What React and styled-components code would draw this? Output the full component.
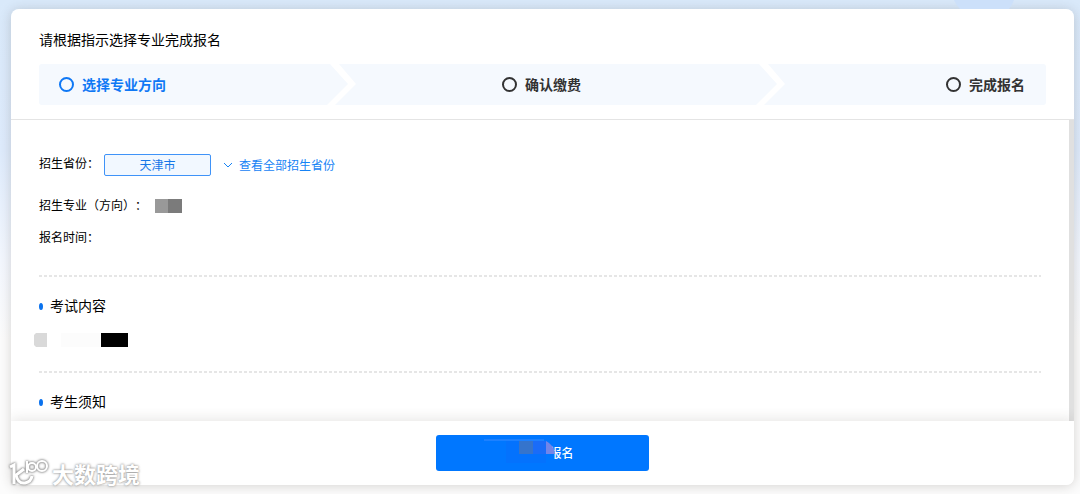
import React from "react";
import styled, { createGlobalStyle } from "styled-components";

const GlobalStyle = createGlobalStyle`
  * { box-sizing: border-box; }
  body {
    margin: 0;
    font-family: "Noto Sans CJK SC", sans-serif;
    font-size: 12px;
    line-height: 20px;
    text-spacing-trim: space-all;
    color: #000;
  }
`;

const Page = styled.div`
  position: relative;
  height: 100vh;
  padding: 9px 6px 9px 11px;
  background: linear-gradient(#d9e9fa 0, #deebfc 150px, #f3f7fe 260px, #fcfcfc 340px);
`;

const Backdrop = styled.svg`
  position: absolute;
  top: 0;
  right: 64px;
`;

const Shadow = styled.div`
  height: 100%;
  border-radius: 8px;
  box-shadow: 0 1px 12px rgba(60, 50, 40, 0.2);
`;

const Card = styled.main`
  display: flex;
  flex-direction: column;
  height: 100%;
  border-radius: 8px;
  background: #fff;
  overflow: hidden;
`;

const Header = styled.header`
  padding: 20px 28px 14px;
  border-bottom: 1px solid #e4e4e4;
`;

const Title = styled.h1`
  margin: 0 0 15px;
  font-size: 14px;
  font-weight: 400;
  line-height: 20px;
`;

const Steps = styled.ol`
  display: grid;
  grid-template-columns: 288fr 30px 400fr 30px 260fr;
  height: 41px;
  margin: 0;
  padding: 0;
  list-style: none;
  border-radius: 3px;
  background: #f5f9fe;
`;

const Step = styled.li`
  display: flex;
  align-items: center;
  justify-content: ${(p) => p.$align};
  gap: 8px;
  padding: ${(p) => p.$pad};
  font-size: 14px;
  font-weight: 700;
  line-height: 20px;
  color: ${(p) => (p.$active ? "#0f78f5" : "#333")};
`;

const StepLabel = styled.span`
  padding-bottom: 2px;
`;

const Ring = styled.span`
  width: 15px;
  height: 15px;
  border: 2px solid currentColor;
  border-radius: 50%;
`;

const Content = styled.section`
  flex: 1;
  min-height: 0;
  padding: 33px 28px 0;
  overflow: hidden;
  border-right: 5px solid #e0e0e0;
`;

const Row = styled.div`
  display: flex;
  align-items: center;
  height: 22px;
  margin-bottom: ${(p) => p.$gap}px;
`;

const RowLabel = styled.span`
  padding-bottom: 2px;
`;

const Province = styled.button`
  width: 107px;
  height: 22px;
  margin: 2px 12px 0 5px;
  padding: 0;
  border: 1px solid #3f93f8;
  border-radius: 2px;
  background: #f2f8ff;
  color: #1677e8;
  font: inherit;
`;

const MoreLink = styled.a`
  display: flex;
  align-items: center;
  gap: 6px;
  margin-top: 2px;
  color: #1683f5;
  font-size: 12px;
  text-decoration: none;
`;

const Mosaic = styled.svg`
  display: block;
  margin-left: ${(p) => p.$left || 0}px;
`;

const Divider = styled.hr`
  height: 2px;
  margin: 0;
  border: 0;
  background: repeating-linear-gradient(90deg, #e6e6e6 0 3px, #fff 3px 5px);
`;

const Heading = styled.h2`
  display: flex;
  align-items: center;
  gap: 7px;
  height: 22px;
  margin: 18px 0 16px;
  font-size: 14px;
  font-weight: 400;
  &::before {
    content: "";
    width: 4px;
    height: 7px;
    border-radius: 50%;
    background: #0a72ee;
  }
`;

const HeadingText = styled.span`
  padding-bottom: 2px;
`;

const Exam = styled.div`
  padding-bottom: 24px;
`;

const Footer = styled.footer`
  position: relative;
  display: flex;
  justify-content: center;
  padding: 14px 0;
  background: #fff;
  box-shadow: 0 -2px 12px rgba(60, 50, 40, 0.12);
`;

const Submit = styled.button`
  position: relative;
  width: 213px;
  height: 36px;
  padding: 0 0 0 38px;
  border: 0;
  border-radius: 3px;
  background: #0077ff;
  color: #fff;
  font: inherit;
  font-weight: 500;
`;

const SubmitMosaic = styled.svg`
  position: absolute;
  top: 4px;
  left: 48px;
`;

const Watermark = styled.div`
  position: absolute;
  bottom: 6px;
  left: 9px;
  display: flex;
  align-items: center;
  gap: 3px;
  color: #fff;
  font-size: 22px;
  font-weight: 700;
  line-height: 30px;
  text-shadow: 0 0 2px #999, 0 0 3px #aaa;
  svg { filter: drop-shadow(0 0 1px #888) drop-shadow(0 0 1px #aaa); }
`;

const Arrow = () => (
  <svg width="30" height="41" viewBox="0 0 30 41" aria-hidden="true">
    <path d="M3 0H12L29 20L8 41H0L21 20Z" fill="#fff" />
  </svg>
);

export default function App() {
  return (
    <>
      <GlobalStyle />
      <Page>
        <Backdrop width="62" height="9" aria-hidden="true">
          <path d="M0 0H60Q58 5 55 9H6Q2 5 0 0Z" fill="#cce0fa" />
        </Backdrop>
        <Shadow>
          <Card>
            <Header>
              <Title>请根据指示选择专业完成报名</Title>
              <Steps>
                <Step $active $align="flex-start" $pad="0 0 0 20px"><Ring /><StepLabel>选择专业方向</StepLabel></Step>
                <Arrow />
                <Step $align="center" $pad="0 30px 0 0"><Ring /><StepLabel>确认缴费</StepLabel></Step>
                <Arrow />
                <Step $align="flex-end" $pad="0 21px 0 0"><Ring /><StepLabel>完成报名</StepLabel></Step>
              </Steps>
            </Header>
            <Content>
              <Row $gap={20}>
                <RowLabel>招生省份：</RowLabel>
                <Province type="button">天津市</Province>
                <MoreLink href="#provinces">
                  <svg width="10" height="6" viewBox="0 0 10 6" fill="none" stroke="currentColor" aria-hidden="true">
                    <path d="M1 1L5 5L9 1" />
                  </svg>
                  查看全部招生省份
                </MoreLink>
              </Row>
              <Row $gap={10}>
                <RowLabel>招生专业（方向）：</RowLabel>
                <Mosaic $left={8} width="27" height="14" aria-hidden="true">
                  <path d="M0 0H13V14H0Z" fill="#999" />
                  <path d="M13 0H27V14H13Z" fill="#7b7b7b" />
                </Mosaic>
              </Row>
              <Row $gap={26}>
                <RowLabel>报名时间：</RowLabel>
              </Row>
              <Divider />
              <Exam>
                <Heading><HeadingText>考试内容</HeadingText></Heading>
                <Mosaic $left={-5} width="94" height="14" aria-hidden="true">
                  <path d="M2 0H13V14H2L0 12V2Z" fill="#d9d9d9" />
                  <path d="M27 0H66V14H27Z" fill="#fcfcfc" />
                  <path d="M67 0H94V14H67Z" fill="#000" />
                </Mosaic>
              </Exam>
              <Divider />
              <Heading><HeadingText>考生须知</HeadingText></Heading>
            </Content>
            <Footer>
              <Submit type="button">
                报名
                <SubmitMosaic width="72" height="27" aria-hidden="true">
                  <path d="M0 1H60" stroke="#3a8bff" />
                  <path d="M22 2H62V24H22Z" fill="#0472fd" />
                  <path d="M35 2H49V15H35Z" fill="#3574cc" />
                  <path d="M49 2H62V15H49Z" fill="#1a6cf8" />
                  <path d="M62 2Q70 6 71 15H62Z" fill="#7385e8" />
                  <path d="M62 15H70V24H62Z" fill="#0077ff" />
                </SubmitMosaic>
              </Submit>
            </Footer>
          </Card>
        </Shadow>
        <Watermark>
          <svg width="40" height="30" viewBox="0 0 40 30" fill="none" stroke="#fff" strokeWidth="3" aria-hidden="true">
            <path d="M1 9L5 7V26" />
            <path d="M15 11L7 17Q9 26 16 25Q22 24 23 18" />
            <path d="M18 15V3" strokeWidth="2" />
            <circle cx="23" cy="9" r="4" strokeWidth="2" />
            <circle cx="33" cy="8" r="5" strokeWidth="2" />
          </svg>
          大数跨境
        </Watermark>
      </Page>
    </>
  );
}
